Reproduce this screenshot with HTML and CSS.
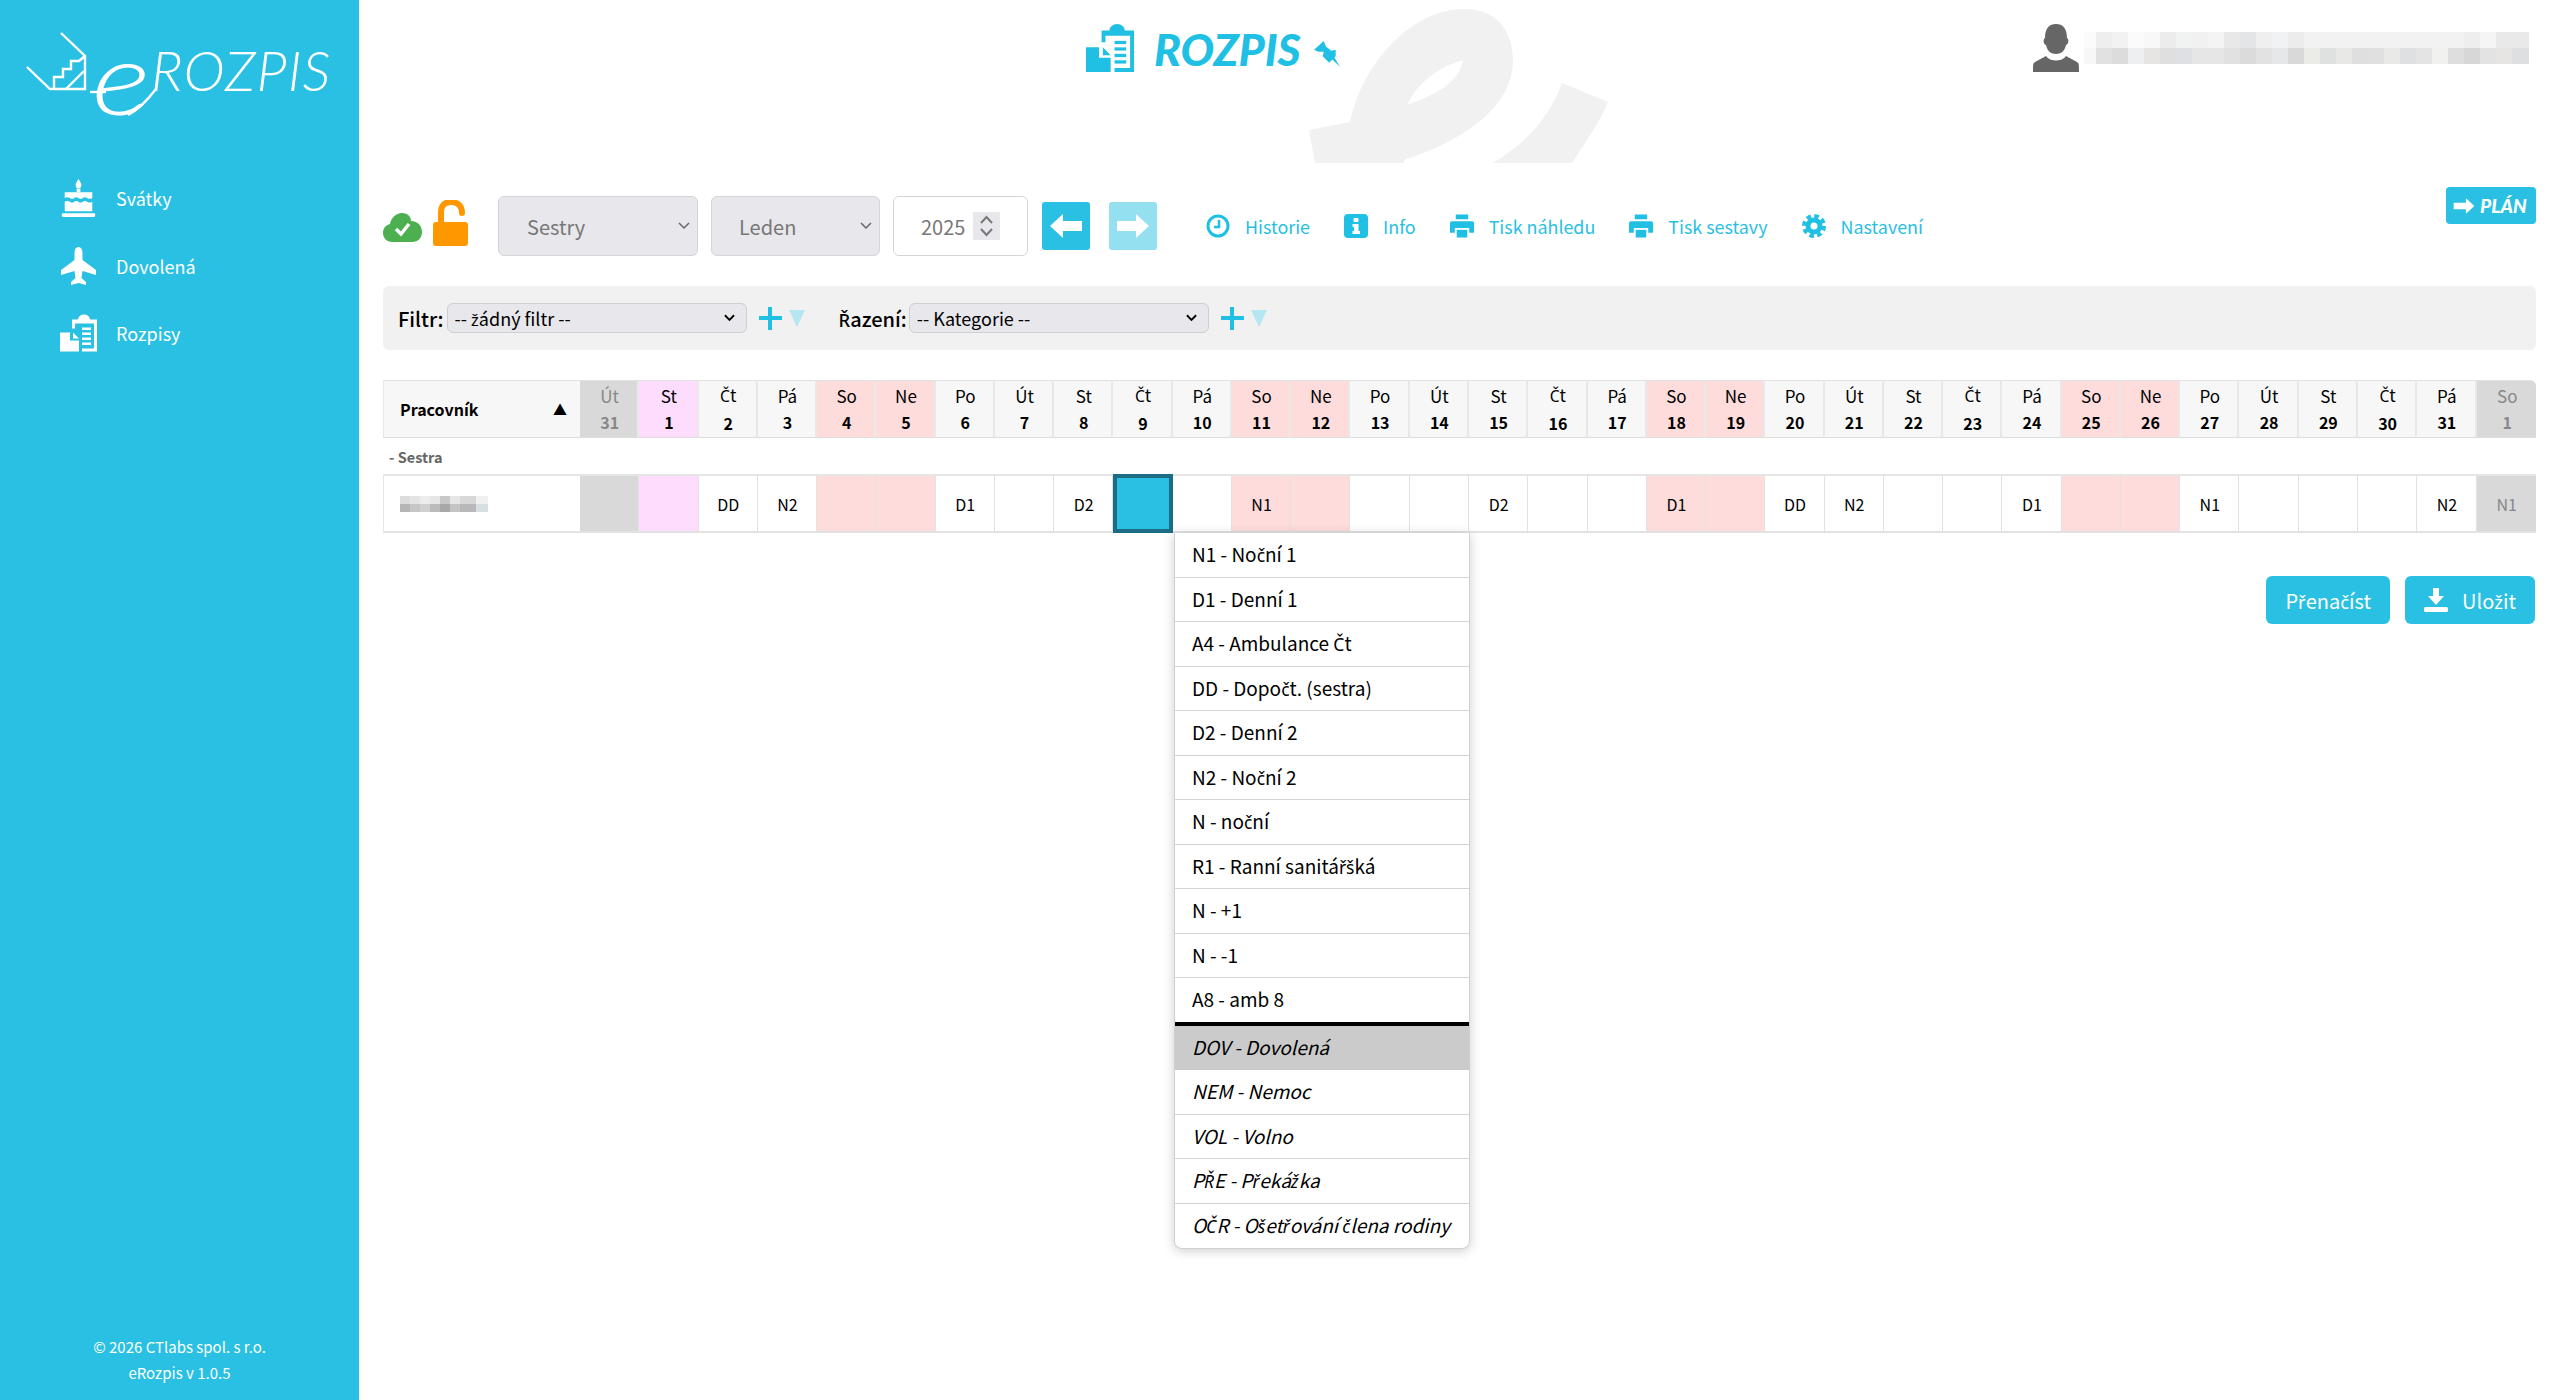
FILE: index.html
```html
<!DOCTYPE html>
<html>
<head>
    <meta charset="UTF-8">
    <title>eRozpis</title>
    <link rel="stylesheet" href="styles.css">
</head>
<body>
<div class="app">
    <!-- Levy panel -->
    <aside class="sidebar">
        <div class="brand">
            <svg class="brand-roof" viewBox="0 0 62 62" fill="none" stroke="#fff" stroke-width="2.4">
                <path d="M35 2 L59 25 V58 H24 L1 36"/>
                <path d="M28 57 V46 H37 V38 H45 V30 H53 L59 25"/>
                <path d="M40 58 L58 40"/>
            </svg>
            <span class="brand-e">e</span>
            <svg class="brand-tail" viewBox="0 0 70 30" fill="none" stroke="#fff" stroke-width="2.400">
                <path d="M0 4 H16"/>
                <path d="M38 27 C48 22 56 14 66 1"/>
            </svg>
            <span class="brand-name">ROZPIS</span>
        </div>
        <nav class="nav">
            <a class="nav-item" href="#">
                <svg class="nav-icon" viewBox="0 0 37 40" fill="#fff">
                    <path d="M18.5 0 C20.5 3 21.5 4.5 21.5 6.5 A3 3 0 0 1 15.500 6.500 C15.500 4.500 16.500 3 18.500 0Z"/>
                    <rect x="16.500" y="10" width="4" height="4"/>
                    <path d="M4 14 H33 V20 C29 23 26 17 23 20 C20 23 17 17 14 20 C11 23 8 17 4 20Z"/>
                    <path d="M4 24 C8 21 11 27 14 24 C17 21 20 27 23 24 C26 21 29 27 33 24 V34 H4Z"/>
                    <rect x="1" y="36" width="35" height="4" rx="1"/>
                </svg>
                <span>Svátky</span>
            </a>
            <a class="nav-item" href="#">
                <svg class="nav-icon" viewBox="0 0 37 38" fill="#fff">
                    <path d="M18.500 0 C21 0 22.500 2 22.500 6 V13 L36 23 V28 L22.500 24 L21.500 31 L26 35 V38 L18.500 36 L11 38 V35 L15.500 31 L14.500 24 L1 28 V23 L14.500 13 V6 C14.500 2 16 0 18.500 0Z"/>
                </svg>
                <span>Dovolená</span>
            </a>
            <a class="nav-item" href="#">
                <svg class="nav-icon" viewBox="0 0 37 37" fill="#fff">
                    <path d="M12 5 H18 A6 5 0 0 1 30 5 H37 V37 H22 V34 H34 V9 H15 V14 H12Z"/>
                    <path d="M0 18 H10 V26 H19 V37 H0Z"/>
                    <path d="M13 18 L19 24 H13Z"/>
                    <rect x="22" y="13" width="9" height="2.500"/>
                    <rect x="22" y="18" width="9" height="2.500"/>
                    <rect x="22" y="23" width="9" height="2.500"/>
                    <rect x="22" y="28" width="9" height="2.500"/>
                </svg>
                <span>Rozpisy</span>
            </a>
        </nav>
        <footer class="copy">
            <p>© 2026 CTlabs spol. s r.o.</p>
            <p>eRozpis v 1.0.5</p>
        </footer>
    </aside>

    <main class="content">
        <!-- Hlavicka -->
        <header class="top">
            <svg class="watermark" viewBox="0 0 300 154" fill="#f1f1f1">
                <path fill-rule="evenodd" d="M0 121 L41 113 C55 50 105 0 155 0 C190 0 204 25 204 51 C204 95 160 130 95 151 L95 154 H6Z M154 51 C130 58 110 72 98 96 C125 86 150 75 154 51Z"/>
                <path d="M253 74 L299 93 C290 115 275 135 263 154 H184 C215 135 240 110 253 74Z"/>
            </svg>
            <div class="title">
                <svg class="title-icon" viewBox="0 0 37 37" fill="#20c0e4">
                    <path d="M12 5 H18 A6 5 0 0 1 30 5 H37 V37 H22 V34 H34 V9 H15 V14 H12Z"/>
                    <path d="M0 18 H10 V26 H19 V37 H0Z"/>
                    <path d="M13 18 L19 24 H13Z"/>
                    <rect x="22" y="13" width="9" height="2.500"/>
                    <rect x="22" y="18" width="9" height="2.500"/>
                    <rect x="22" y="23" width="9" height="2.500"/>
                    <rect x="22" y="28" width="9" height="2.500"/>
                </svg>
                <span class="title-text">ROZPIS</span>
                <svg class="title-pin" viewBox="0 0 24 24" fill="#20c0e4">
                    <path d="M0 8 L9 0 L11 5 L16 9 L20 8 L20 14 L14 20 L8 14 L9 10 L4 10Z"/>
                    <path d="M14 14 L17 12 L24 24Z"/>
                </svg>
            </div>
            <div class="user">
                <svg class="user-icon" viewBox="0 0 46 48" fill="#666">
                    <path d="M23 0 C31 0 34 6 34 14 C36 15 36 20 33 21 C32 26 29 30 23 30 C17 30 14 26 13 21 C10 20 10 15 12 14 C12 6 15 0 23 0Z"/>
                    <path d="M13 32 C17 38 29 38 33 32 L44 38 C46 39 46 41 46 48 H0 C0 41 0 39 2 38Z"/>
                </svg>
                <div class="user-name">
                    <div class="blur-top"></div>
                    <div class="blur-bottom"></div>
                </div>
            </div>
        </header>

        <!-- Ovladani -->
        <section class="toolbar">
            <svg class="icon-cloud" viewBox="0 0 39 29">
                <path fill="#4caf50" d="M19 0 C25 0 28 4 28 8 C35 8 39 13 39 19 C39 25 35 29 29 29 H9 C4 29 0 25 0 20 C0 15 3 12 7 11 C8 5 13 0 19 0Z"/>
                <path fill="none" stroke="#fff" stroke-width="3.500" d="M13 16 L18 21 L26 11"/>
            </svg>
            <svg class="icon-lock" viewBox="0 0 35 46" fill="#ff9800">
                <path d="M8 23 V12 C8 5 12 2 18 2 C25 2 29 6 29 13" fill="none" stroke="#ff9800" stroke-width="6" stroke-linecap="round"/>
                <rect x="0" y="22" width="35" height="24" rx="3"/>
            </svg>
            <select class="pick pick-group"><option>Sestry</option></select>
            <select class="pick pick-month"><option>Leden</option></select>
            <div class="year">
                <span>2025</span>
                <svg class="spin" viewBox="0 0 27 28" fill="none" stroke="#777" stroke-width="2">
                    <rect x="0" y="0" width="27" height="28" fill="#e8e8ec" stroke="none"/>
                    <path d="M8 11 L13.500 5 L19 11"/>
                    <path d="M8 17 L13.500 23 L19 17"/>
                </svg>
            </div>
            <button class="arrow-btn">
                <svg viewBox="0 0 34 26" fill="#fff"><path d="M1 13 L14 1 V8 H33 V18 H14 V25Z"/></svg>
            </button>
            <button class="arrow-btn arrow-off">
                <svg viewBox="0 0 34 26" fill="#fff"><path d="M33 13 L20 1 V8 H1 V18 H20 V25Z"/></svg>
            </button>
            <div class="links">
                <a href="#">
                    <svg viewBox="0 0 24 24" fill="none" stroke="#20c0e4" stroke-width="3">
                        <circle cx="12" cy="12" r="10"/>
                        <path stroke-width="2.500" d="M13 6 V13 H8"/>
                    </svg>
                    Historie
                </a>
                <a href="#">
                    <svg viewBox="0 0 24 24">
                        <rect width="24" height="24" rx="4" fill="#20c0e4"/>
                        <rect x="9.500" y="4" width="5" height="4" rx="1" fill="#fff"/>
                        <path fill="#fff" d="M8.500 10 H14.500 V17 H16 V20 H8.500 V17 H10 V13 H8.500Z"/>
                    </svg>
                    Info
                </a>
                <a href="#">
                    <svg viewBox="0 0 25 24" fill="#20c0e4">
                        <path d="M6 0 H19 V5 H6Z"/>
                        <path fill-rule="evenodd" d="M2 7 H23 A2 2 0 0 1 25 9 V19 H20 V14 H5 V19 H0 V9 A2 2 0 0 1 2 7Z"/>
                        <rect x="7" y="16" width="11" height="8"/>
                    </svg>
                    Tisk náhledu
                </a>
                <a href="#">
                    <svg viewBox="0 0 25 24" fill="#20c0e4">
                        <path d="M6 0 H19 V5 H6Z"/>
                        <path fill-rule="evenodd" d="M2 7 H23 A2 2 0 0 1 25 9 V19 H20 V14 H5 V19 H0 V9 A2 2 0 0 1 2 7Z"/>
                        <rect x="7" y="16" width="11" height="8"/>
                    </svg>
                    Tisk sestavy
                </a>
                <a href="#">
                    <svg viewBox="0 0 24 24" fill="none" stroke="#20c0e4">
                        <circle cx="12" cy="12" r="6" stroke-width="5"/>
                        <circle cx="12" cy="12" r="10" stroke-width="4" stroke-dasharray="4.500 3.354"/>
                    </svg>
                    Nastavení
                </a>
            </div>
            <button class="plan-btn">
                <svg viewBox="0 0 34 26" fill="#fff"><path d="M33 13 L20 1 V8 H1 V18 H20 V25Z"/></svg>
                <span>PLÁN</span>
            </button>
        </section>

        <!-- Filtr a razeni -->
        <section class="filters">
            <label class="filter-label">Filtr:</label>
            <div class="filter-select filter-a">
                <span>-- <span class="cz">ž</span>ádný filtr --</span>
                <svg viewBox="0 0 12 8" fill="none" stroke="#000" stroke-width="2"><path d="M1 1 L6 6 L11 1"/></svg>
            </div>
            <span class="plus"></span>
            <span class="tri"></span>
            <label class="filter-label label-sort"><span class="cz">Ř</span>azení:</label>
            <div class="filter-select filter-b">
                <span>-- Kategorie --</span>
                <svg viewBox="0 0 12 8" fill="none" stroke="#000" stroke-width="2"><path d="M1 1 L6 6 L11 1"/></svg>
            </div>
            <span class="plus"></span>
            <span class="tri"></span>
        </section>

        <!-- Tabulka rozpisu -->
        <div class="grid-wrap">
            <table class="grid">
                <thead>
                    <tr>
                        <th class="worker"><span>Pracovník</span><i>▲</i></th>
                        <th class="out">Út<b>31</b></th><th class="holiday">St<b>1</b></th><th><span class="cz">Č</span>t<b>2</b></th><th>Pá<b>3</b></th><th class="weekend">So<b>4</b></th><th class="weekend">Ne<b>5</b></th><th>Po<b>6</b></th><th>Út<b>7</b></th><th>St<b>8</b></th><th><span class="cz">Č</span>t<b>9</b></th><th>Pá<b>10</b></th><th class="weekend">So<b>11</b></th><th class="weekend">Ne<b>12</b></th><th>Po<b>13</b></th><th>Út<b>14</b></th><th>St<b>15</b></th><th><span class="cz">Č</span>t<b>16</b></th><th>Pá<b>17</b></th><th class="weekend">So<b>18</b></th><th class="weekend">Ne<b>19</b></th><th>Po<b>20</b></th><th>Út<b>21</b></th><th>St<b>22</b></th><th><span class="cz">Č</span>t<b>23</b></th><th>Pá<b>24</b></th><th class="weekend">So<b>25</b></th><th class="weekend">Ne<b>26</b></th><th>Po<b>27</b></th><th>Út<b>28</b></th><th>St<b>29</b></th><th><span class="cz">Č</span>t<b>30</b></th><th>Pá<b>31</b></th><th class="out">So<b>1</b></th>
                    </tr>
                </thead>
                <tbody>
                    <tr class="group"><td colspan="34">- Sestra</td></tr>
                    <tr class="person">
                        <td class="worker"><div class="blur-person"></div></td>
                        <td class="out"></td><td class="holiday"></td><td>DD</td><td>N2</td><td class="weekend"></td><td class="weekend"></td><td>D1</td><td></td><td>D2</td><td class="selected"></td><td></td><td class="weekend">N1</td><td class="weekend"></td><td></td><td></td><td>D2</td><td></td><td></td><td class="weekend">D1</td><td class="weekend"></td><td>DD</td><td>N2</td><td></td><td></td><td>D1</td><td class="weekend"></td><td class="weekend"></td><td>N1</td><td></td><td></td><td></td><td>N2</td><td class="out">N1</td>
                    </tr>
                </tbody>
            </table>

            <ul class="shift-menu">
                <li>N1 - No<span class="cz">č</span>ní 1</li>
                <li>D1 - Denní 1</li>
                <li>A4 - Ambulance <span class="cz">Č</span>t</li>
                <li>DD - Dopo<span class="cz">č</span>t. (sestra)</li>
                <li>D2 - Denní 2</li>
                <li>N2 - No<span class="cz">č</span>ní 2</li>
                <li>N - no<span class="cz">č</span>ní</li>
                <li>R1 - Ranní sanitá<span class="cz">ř</span><span class="cz">š</span>ká</li>
                <li>N - +1</li>
                <li>N - -1</li>
                <li class="last-shift">A8 - amb 8</li>
                <li class="absence active">DOV - Dovolená</li>
                <li class="absence">NEM - Nemoc</li>
                <li class="absence">VOL - Volno</li>
                <li class="absence">P<span class="cz">Ř</span>E - P<span class="cz">ř</span>eká<span class="cz">ž</span>ka</li>
                <li class="absence">O<span class="cz">Č</span>R - O<span class="cz">š</span>et<span class="cz">ř</span>ování <span class="cz">č</span>lena rodiny</li>
            </ul>
        </div>

        <div class="actions">
            <button class="btn"><span>P<span class="cz">ř</span>ena<span class="cz">č</span>íst</span></button>
            <button class="btn">
                <svg viewBox="0 0 24 24" fill="#fff">
                    <path d="M9 0 H15 V8 H20 L12 17 L4 8 H9Z"/>
                    <rect y="19" width="24" height="5" rx="1.500"/>
                </svg>
                <span>Ulo<span class="cz">ž</span>it</span>
            </button>
        </div>
    </main>
</div>
</body>
</html>
```

FILE: styles.css
```css
* {
    box-sizing: border-box;
}
body {
    margin: 0;
    font-family: "Noto Sans CJK JP", "Liberation Sans", sans-serif;
    font-size: 18px;
    color: #000;
    background-color: #fff;
}
a {
    text-decoration: none;
}
button {
    font-family: inherit;
    border: none;
    cursor: pointer;
}
/* pismena s hackem, hlavni font je nema spravne slozena */
.cz {
    font-family: "Noto Sans", sans-serif;
    font-size: 0.92em;
}

.app {
    display: flex;
    height: 1400px;
    overflow: hidden;
}

/* sidebar */
.sidebar {
    width: 359px;
    flex: none;
    background-color: #29c0e3;
    color: #fff;
    display: flex;
    flex-direction: column;
}
.brand {
    position: relative;
    height: 178px;
}
.brand-roof {
    position: absolute;
    left: 26px;
    top: 31px;
    width: 62px;
    height: 62px;
}
.brand-e {
    position: absolute;
    left: 92px;
    top: 26px;
    font-family: "Lato", sans-serif;
    font-weight: 300;
    font-style: italic;
    font-size: 100px;
    line-height: 100px;
    transform: scaleX(1.25);
    transform-origin: left;
}
.brand-tail {
    position: absolute;
    left: 90px;
    top: 88px;
    width: 70px;
    height: 30px;
}
.brand-name {
    position: absolute;
    left: 151px;
    top: 40px;
    font-family: "Lato", sans-serif;
    font-weight: 300;
    font-style: italic;
    font-size: 56px;
    line-height: 60px;
    letter-spacing: 1px;
}
.nav {
    display: flex;
    flex-direction: column;
    gap: 27.500px;
    padding-left: 60px;
}
.nav-item {
    display: flex;
    align-items: center;
    gap: 19px;
    height: 40px;
    color: #fff;
}
.nav-icon {
    width: 37px;
    height: 38px;
}
.copy {
    margin-top: auto;
    padding-bottom: 14px;
    text-align: center;
    font-size: 15px;
}
.copy p {
    margin: 0;
    line-height: 26px;
}

/* content */
.content {
    flex: 1;
    padding: 0 22px 0 24px;
    min-width: 0;
}
.top {
    position: relative;
    height: 187px;
    display: flex;
    align-items: flex-start;
    padding: 24px 7px 0 703px;
    justify-content: space-between;
}
.watermark {
    position: absolute;
    left: 926px;
    top: 9px;
    width: 300px;
    height: 154px;
}
.title {
    position: relative;
    display: flex;
    align-items: flex-start;
    gap: 20px;
}
.title-icon {
    width: 48px;
    height: 48px;
}
.title-text {
    font-family: "Lato", sans-serif;
    font-weight: 900;
    font-style: italic;
    font-size: 44.500px;
    line-height: 50px;
    color: #20c0e4;
}
.title-pin {
    width: 26px;
    height: 26px;
    margin: 17px 0 0 -7px;
}
.user {
    position: relative;
    display: flex;
    gap: 5px;
}
.user-icon {
    width: 46px;
    height: 48px;
}
.user-name {
    width: 445px;
    margin-top: 8px;
}
.blur-top,
.blur-bottom {
    height: 16px;
}
.blur-top {
    background: linear-gradient(90deg,
        #fbfbfb 0 12px, #eeeeee 12px 28px, #f2f2f2 28px 44px, #fbfbfb 44px 60px, #f8f8f8 60px 76px, #ececec 76px 92px,
        #f1f2f2 92px 108px, #f1f1f1 108px 124px, #f4f4f4 124px 140px, #e8e8e8 140px 156px, #e4e5e6 156px 172px, #efefef 172px 188px,
        #f1f2f3 188px 204px, #ececec 204px 220px, #f2f2f2 220px 380px, #eeeeee 380px 396px, #f5f5f5 396px 412px, #e9e9e9 412px 445px);
}
.blur-bottom {
    background: linear-gradient(90deg,
        #f7f7f7 0 12px, #e1e1e1 12px 28px, #dcdcdc 28px 44px, #eeeff0 44px 60px, #e6e5e3 60px 76px, #e0dfdf 76px 92px,
        #dfe0e4 92px 108px, #e6e6e6 108px 140px, #e1e1e1 140px 156px, #dbdbdb 156px 172px, #e2e2e2 172px 188px, #e6e7e9 188px 204px,
        #d9d9d9 204px 220px, #ebebe8 220px 236px, #dfe1e0 236px 252px, #e8e9e7 252px 268px, #dfdfdf 268px 284px, #e0e0e0 284px 300px,
        #e9e9e7 300px 316px, #dfe0e2 316px 332px, #e3e4e3 332px 348px, #f1f1ef 348px 364px, #dedede 364px 380px, #d8d7d8 380px 396px,
        #e2e3e2 396px 412px, #e6e5e3 412px 428px, #dedfe0 428px 445px);
}

/* toolbar */
.toolbar {
    height: 78px;
    display: flex;
    align-items: center;
}
.icon-cloud {
    width: 39px;
    height: 29px;
    margin-top: 2px;
}
.icon-lock {
    width: 35px;
    height: 46px;
    margin: -6px 0 0 11px;
}
.pick {
    appearance: none;
    height: 60px;
    padding-left: 28px;
    font-family: inherit;
    font-size: 20px;
    color: #777;
    background-color: #e8e8ec;
    border: 1px solid #d5d5d8;
    border-radius: 6px;
    background-image: url("data:image/svg+xml,%3Csvg xmlns='http://www.w3.org/2000/svg' viewBox='0 0 12 8'%3E%3Cpath d='M1 1l5 5 5-5' fill='none' stroke='%23666' stroke-width='1.500'/%3E%3C/svg%3E");
    background-repeat: no-repeat;
    background-position: right 7px center;
    background-size: 12px 8px;
}
.pick-group {
    width: 200px;
    margin-left: 30px;
}
.pick-month {
    width: 169px;
    margin-left: 13px;
    padding-left: 27px;
}
.year {
    width: 135px;
    height: 60px;
    margin-left: 13px;
    padding-left: 27px;
    display: flex;
    align-items: center;
    gap: 8px;
    font-size: 20px;
    color: #777;
    border: 1px solid #d5d5d8;
    border-radius: 6px;
}
.spin {
    width: 27px;
    height: 28px;
}
.arrow-btn {
    width: 48px;
    height: 48px;
    margin-left: 14px;
    padding: 0;
    display: flex;
    align-items: center;
    justify-content: center;
    background-color: #29c0e3;
    border-radius: 3px;
}
.arrow-btn svg {
    width: 34px;
    height: 26px;
}
.arrow-off {
    margin-left: 19px;
    background-color: #94e0f1;
}
.links {
    display: flex;
    margin-left: 49px;
    gap: 34px;
}
.links a {
    display: flex;
    align-items: center;
    gap: 15px;
    color: #29bfe3;
    font-size: 17.900px;
    line-height: 24px;
}
.links svg {
    width: 24px;
    height: 24px;
}
.plan-btn {
    align-self: flex-start;
    margin-left: auto;
    width: 90px;
    height: 37px;
    padding: 0 0 0 7px;
    display: flex;
    align-items: center;
    gap: 5px;
    background-color: #29c0e3;
    color: #fff;
    border-radius: 4px;
    font-family: "Lato", sans-serif;
    font-weight: 900;
    font-style: italic;
    font-size: 19px;
}
.plan-btn svg {
    width: 22px;
    height: 18px;
}

/* filter bar */
.filters {
    margin-top: 21px;
    height: 64px;
    padding-left: 15px;
    display: flex;
    align-items: center;
    background-color: #f1f1f1;
    border-radius: 6px;
}
.filter-label {
    font-size: 20px;
    font-weight: 500;
}
.filter-select {
    width: 300px;
    height: 30px;
    margin-left: 3px;
    padding: 0 11px 0 7px;
    display: flex;
    align-items: center;
    justify-content: space-between;
    font-size: 18px;
    color: #000;
    background-color: #e8e8ec;
    border: 1px solid #cfcfd2;
    border-radius: 6px;
}
.filter-select svg {
    width: 11px;
    height: 8px;
}
.filter-b {
    margin-left: 2px;
}
.label-sort {
    margin-left: 34px;
}
.plus {
    width: 23px;
    height: 23px;
    margin-left: 12px;
    background: linear-gradient(#20c0e4, #20c0e4) center / 100% 4px no-repeat, linear-gradient(#20c0e4, #20c0e4) center / 4px 100% no-repeat;
}
.tri {
    width: 0;
    height: 0;
    margin-left: 7px;
    border-left: 8px solid transparent;
    border-right: 8px solid transparent;
    border-top: 17px solid #b5e6f1;
}

/* table */
.grid-wrap {
    position: relative;
    margin-top: 30px;
}
.grid {
    width: 100%;
    table-layout: fixed;
    border-collapse: separate;
    border-spacing: 0;
}
.grid th {
    height: 58px;
    padding: 0 0 0 2px;
    font-size: 17px;
    font-weight: 400;
    line-height: 27px;
    background-color: #f7f7f7;
    border-top: 1px solid #e2e2e2;
    border-bottom: 1px solid #dcdcdc;
    border-right: 2px solid #e8e8e8;
}
.grid th b {
    display: block;
    font-size: 16px;
    font-weight: 700;
}
.grid th.worker {
    width: 197px;
    padding: 0 13px 0 16px;
    text-align: left;
    font-size: 16px;
    font-weight: 700;
    border-left: 1px solid #e8e8e8;
    border-right: none;
}
.worker span {
    display: inline-block;
}
.worker i {
    float: right;
    font-style: normal;
    font-size: 14px;
}
.grid th:last-child,
.grid td:last-child {
    border-right: none;
}
.grid th:last-child {
    border-top-right-radius: 6px;
}
.grid th.weekend,
.grid td.weekend {
    background-color: #fedcdc;
}
.grid th.holiday,
.grid td.holiday {
    background-color: #fddcfd;
}
.grid th.out,
.grid td.out {
    background-color: #d9d9d9;
    color: #888;
}
.grid th.out b {
    color: #888;
}
.group td {
    height: 36px;
    padding-left: 6px;
    font-size: 14.500px;
    font-weight: 700;
    color: #666;
}
.person td {
    height: 59px;
    padding: 0 0 0 1px;
    text-align: center;
    font-size: 16px;
    border-top: 2px solid #e6e6e6;
    border-bottom: 2px solid #e2e2e2;
    border-right: 1px solid #e2e2e2;
}
.person td.worker {
    border-left: 1px solid #e6e6e6;
    border-right: none;
    padding-left: 16px;
}
.person td.selected {
    background-color: #29c0e3;
    border: 4px solid #1a6d85;
}
.blur-person {
    width: 88px;
    height: 16px;
    background:
        linear-gradient(90deg, #dcdcdc 0 10px, #e4e4e4 10px 20px, #ececec 20px 30px, #e6e6e6 30px 40px, #c8c8c8 40px 50px, #e6e6e6 50px 60px, #d8d8d8 60px 76px, #eef0f1 76px 88px) top / 100% 8px no-repeat,
        linear-gradient(90deg, #b5b5b5 0 10px, #c6c6c6 10px 20px, #d0d0d0 20px 30px, #bbbbbb 30px 40px, #a8a8a8 40px 50px, #c4c4c4 50px 60px, #b8b8b8 60px 76px, #d8dfe2 76px 88px) bottom / 100% 8px no-repeat;
}

/* shift menu */
.shift-menu {
    position: absolute;
    left: 791px;
    top: 153px;
    width: 296px;
    margin: 0;
    padding: 0;
    list-style: none;
    font-size: 19px;
    background-color: #fff;
    border: 1px solid #d0d0d0;
    border-top: none;
    border-radius: 0 0 8px 8px;
    box-shadow: 0 2px 12px rgba(0, 0, 0, 0.2);
}
.shift-menu li {
    height: 44.500px;
    padding-left: 17px;
    line-height: 42px;
    border-bottom: 1px solid #d4d4d4;
}
.shift-menu li.last-shift {
    height: 47.500px;
    border-bottom: 4px solid #000;
}
.shift-menu li.absence {
    font-style: italic;
}
.shift-menu li.active {
    background-color: #cbcbcb;
    border-bottom: none;
}
.shift-menu li:last-child {
    border-bottom: none;
}

/* buttons */
.actions {
    display: flex;
    justify-content: flex-end;
    gap: 15px;
    margin-top: 43px;
    padding-right: 1px;
}
.btn {
    height: 48px;
    padding: 0 19px;
    display: flex;
    align-items: center;
    gap: 14px;
    color: #fff;
    font-size: 20px;
    background-color: #29c0e3;
    border-radius: 6px;
}
.btn svg {
    width: 24px;
    height: 24px;
}
```
